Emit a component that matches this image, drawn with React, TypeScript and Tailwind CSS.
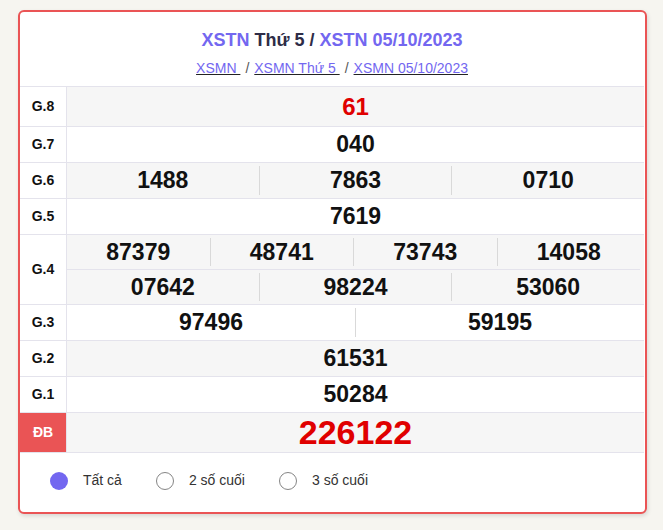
import React from "react";

const PURPLE = "text-[#7367f0]";

function Label({ children, special }: { children: React.ReactNode; special?: boolean }) {
  return (
    <div
      className={
        "w-[47px] shrink-0 flex items-center justify-center border-r border-[#e4e3ec] text-[14px] font-bold " +
        (special ? "bg-[#ea5455] text-white" : "bg-white text-[#111]")
      }
    >
      {children}
    </div>
  );
}

function Cells({ nums, className = "" }: { nums: string[]; className?: string }) {
  return (
    <div className={"flex flex-1 " + className}>
      {nums.map((n, i) => (
        <div
          key={i}
          className={
            "flex-1 flex items-center justify-center text-[23px] font-bold text-[#111] " +
            (i > 0 ? "border-l border-[#d9d9d9] my-[3px]" : "")
          }
        >
          {n}
        </div>
      ))}
    </div>
  );
}

function Row({
  label,
  nums,
  h,
  gray,
}: {
  label: string;
  nums: string[];
  h: string;
  gray?: boolean;
}) {
  return (
    <div className={"flex border-b border-[#e4e3ec] " + h}>
      <Label>{label}</Label>
      <div className={"flex flex-1 " + (gray ? "bg-[#f6f6f6]" : "bg-white")}>
        <Cells nums={nums} />
      </div>
    </div>
  );
}

function Radio({ checked, label }: { checked?: boolean; label: string }) {
  return (
    <div className="flex items-center gap-[15px]">
      <span
        className={
          "block w-[18px] h-[18px] rounded-full " +
          (checked ? "bg-[#7367f0]" : "bg-white border border-[#858585]")
        }
      />
      <span className="text-[14px] text-[#333]">{label}</span>
    </div>
  );
}

export default function App() {
  return (
    <div
      className="min-h-[530px] bg-[#f6f5f0] pl-[18px] pt-[10px]"
      style={{ fontFamily: '"Liberation Sans", Arial, sans-serif' }}
    >
      <div className="w-[629px] rounded-[6px] border-2 border-[#ea5455] bg-white shadow-[1px_2px_4px_rgba(0,0,0,0.12)] overflow-hidden pr-px">
        <div className="h-[74px] flex flex-col items-center pt-[17px]">
          <h2 className="text-[18px] font-bold leading-[22px]">
            <span className={PURPLE}>XSTN</span>{" "}
            <span className="text-[#2e2c47]">Thứ 5 /</span>{" "}
            <span className={PURPLE}>XSTN 05/10/2023</span>
          </h2>
          <div className="mt-[9px] text-[14px] leading-[16px] flex items-center">
            <a className={PURPLE + " underline decoration-[#222] whitespace-pre"}>XSMN </a>
            <span className="px-[5px] text-[#555]">/</span>
            <a className={PURPLE + " underline decoration-[#222] whitespace-pre"}>XSMN Thứ 5 </a>
            <span className="px-[5px] text-[#555]">/</span>
            <a className={PURPLE + " underline decoration-[#222] whitespace-pre"}>XSMN 05/10/2023</a>
          </div>
        </div>

        <div className="border-t border-[#e4e3ec]">
          <div className="flex border-b border-[#e4e3ec] h-[40px]">
            <Label>G.8</Label>
            <div className="flex-1 flex items-center justify-center bg-[#f6f6f6] text-[24px] font-bold text-[#e00000]">
              61
            </div>
          </div>
          <Row label="G.7" nums={["040"]} h="h-[36px]" />
          <Row label="G.6" nums={["1488", "7863", "0710"]} h="h-[36px]" gray />
          <Row label="G.5" nums={["7619"]} h="h-[36px]" />
          <div className="flex border-b border-[#e4e3ec] h-[70px]">
            <Label>G.4</Label>
            <div className="flex-1 flex flex-col bg-[#f6f6f6]">
              <div className="h-[35px] flex border-b border-[#e4e3ec] mr-[4px]">
                <Cells nums={["87379", "48741", "73743", "14058"]} />
              </div>
              <div className="h-[34px] flex">
                <Cells nums={["07642", "98224", "53060"]} />
              </div>
            </div>
          </div>
          <Row label="G.3" nums={["97496", "59195"]} h="h-[36px]" />
          <Row label="G.2" nums={["61531"]} h="h-[36px]" gray />
          <Row label="G.1" nums={["50284"]} h="h-[36px]" />
          <div className="flex border-b border-[#e4e3ec] h-[40px]">
            <Label special>ĐB</Label>
            <div className="flex-1 flex items-center justify-center bg-[#f6f6f6] text-[34px] font-bold text-[#e00000]">
              226122
            </div>
          </div>
        </div>

        <div className="h-[59px] flex items-start pt-[17px] pl-[30px] gap-[34px]">
          <Radio checked label="Tất cả" />
          <Radio label="2 số cuối" />
          <Radio label="3 số cuối" />
        </div>
      </div>
    </div>
  );
}
